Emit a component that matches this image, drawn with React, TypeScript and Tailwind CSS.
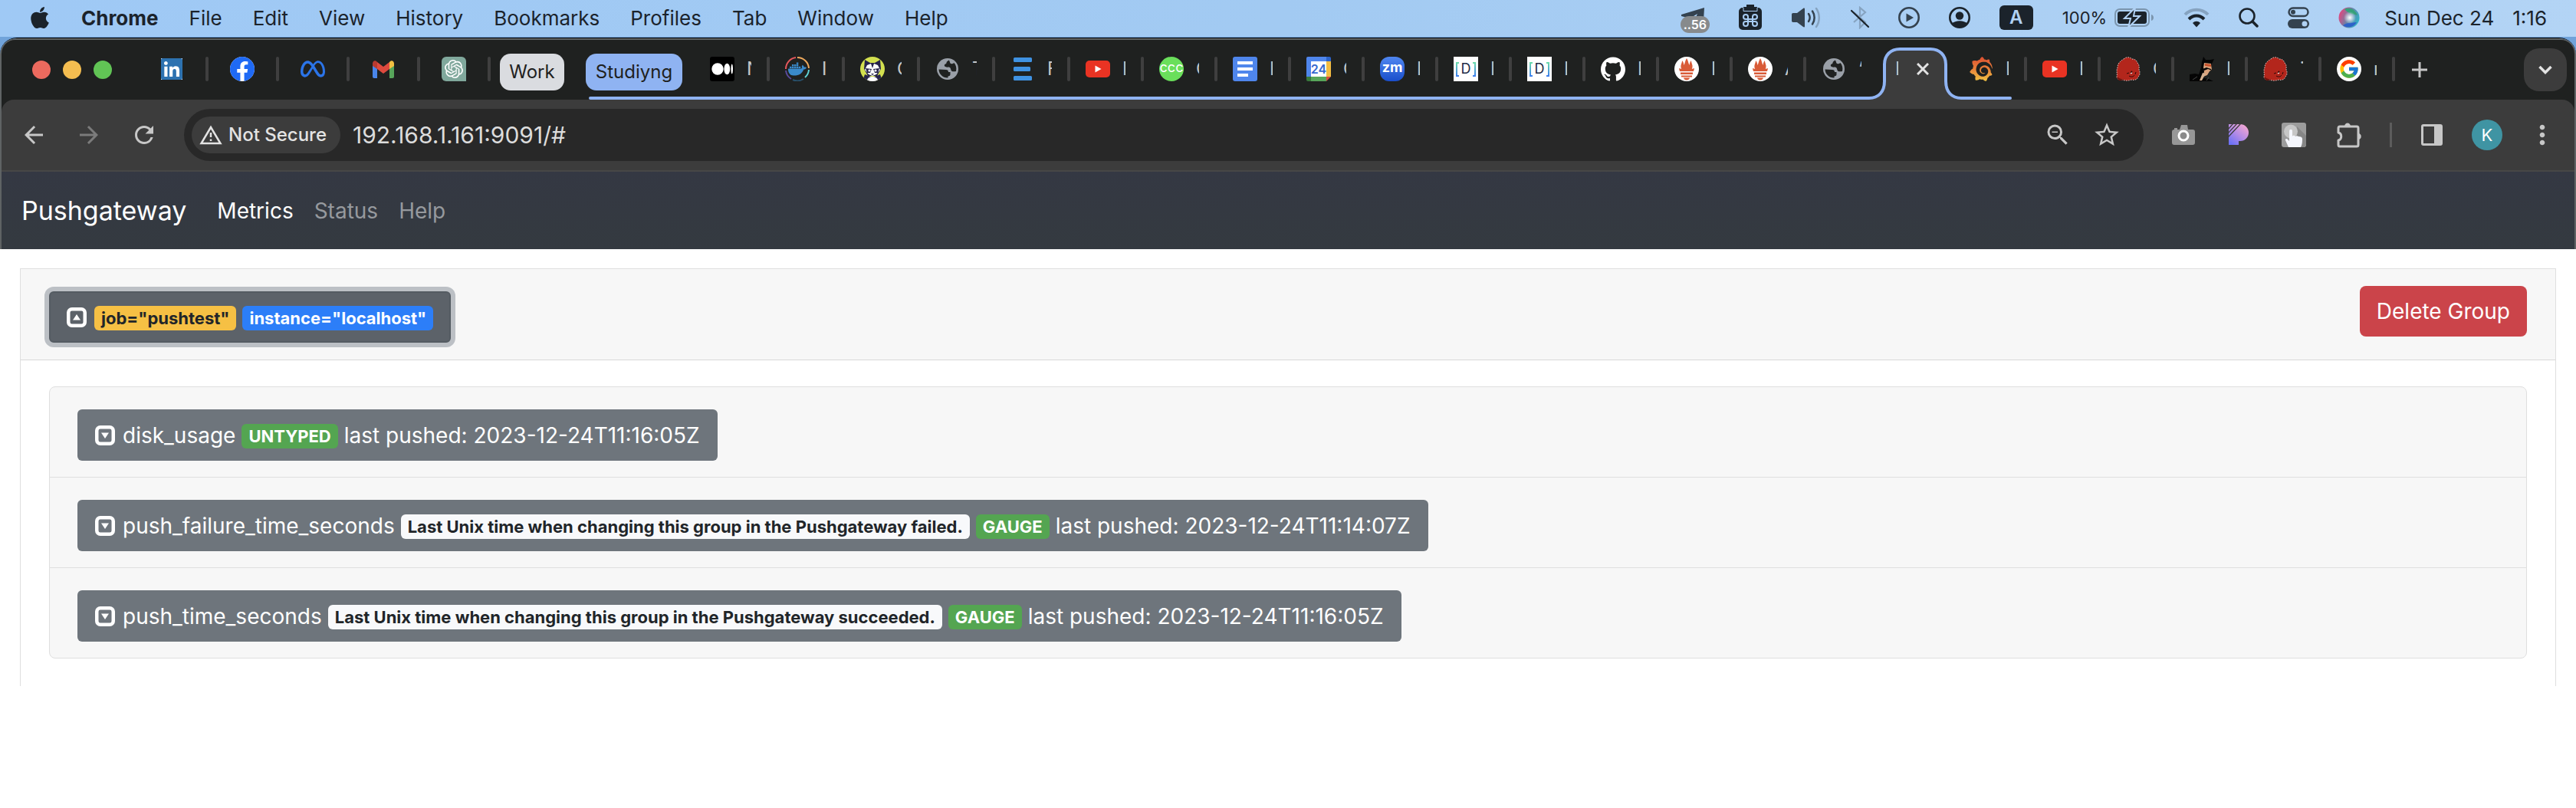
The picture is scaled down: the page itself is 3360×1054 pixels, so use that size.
import type { ReactNode } from "react";
import { FaApple, FaFacebook, FaLinkedin } from "react-icons/fa";
import { FcGoogle } from "react-icons/fc";
import { SiDocker, SiGithub, SiGrafana, SiMeta, SiOpenai } from "react-icons/si";
import { MdArrowBack, MdArrowForward, MdMoreVert, MdRefresh, MdStarBorder, MdZoomOut } from "react-icons/md";

/* ---------- macOS menu bar ---------- */

const menus = ["File", "Edit", "View", "History", "Bookmarks", "Profiles", "Tab", "Window", "Help"];

function PlaneIcon() {
  return (
    <div className="relative h-10 w-[38px]">
      <svg viewBox="0 0 38 20" className="absolute left-0 top-1 w-[38px] text-[#34424f]" fill="currentColor" aria-hidden="true">
        <path d="M1 12 31 3l-1 17H18l4-9-10 6-11-3z" />
      </svg>
      <span className="absolute left-0 top-[18px] flex h-[22px] w-[38px] items-center justify-center rounded-full bg-[#878a8c] text-base font-semibold text-white">
        ..56
      </span>
    </div>
  );
}

function ClipboardIcon() {
  return (
    <svg viewBox="0 0 30 34" className="h-[34px] w-[30px]" aria-hidden="true">
      <path d="M10 0h10v3h4v5H6V3h4z" fill="#1b232b" />
      <path d="M6 4H5a5 5 0 0 0-5 5v19a5 5 0 0 0 5 5h20a5 5 0 0 0 5-5V9a5 5 0 0 0-5-5h-1v5H6z" fill="#1b232b" />
      <path d="M6 4v4.500h18V4" fill="none" stroke="#a8ccf3" strokeWidth="1" />
      <path
        d="M12 19v-3a3 3 0 1 0-3 3h12a3 3 0 1 0-3-3v9a3 3 0 1 0 3-3H9a3 3 0 1 0 3 3z"
        fill="none"
        stroke="#a8ccf3"
        strokeWidth="2"
      />
    </svg>
  );
}

function VolumeIcon() {
  return (
    <svg viewBox="0 0 40 30" className="h-[30px] w-10" fill="none" strokeLinecap="round" strokeWidth="2.500" aria-hidden="true">
      <path d="M3 9h5l8-6c1-.8 2-.4 2 .8v22.400c0 1.200-1 1.600-2 .8l-8-6H3c-1.500 0-2-.7-2-2v-8c0-1.300.5-2 2-2z" fill="#34424f" />
      <path d="M23 10c2 3 2 7 0 10M28 6.500c3.500 5 3.500 12 0 17" stroke="#34424f" />
      <path d="M33 3c5 7 5 17 0 24" stroke="#86a3c0" />
    </svg>
  );
}

function BluetoothOffIcon() {
  return (
    <svg viewBox="0 0 24 30" className="h-[30px] w-6" fill="none" strokeWidth="2.200" aria-hidden="true">
      <path d="M4 8l15 13-7 7V2l7 6L4 21" stroke="#86a3c0" />
      <path d="M1 6l22 21" stroke="#1b232b" strokeLinecap="round" />
    </svg>
  );
}

function PlayIcon() {
  return (
    <svg viewBox="0 0 28 28" className="h-7 w-7" aria-hidden="true">
      <circle cx="14" cy="14" r="12.700" fill="none" stroke="#34424f" strokeWidth="2.600" />
      <path d="M10.500 8.500v11l9.500-5.500z" fill="#34424f" />
    </svg>
  );
}

function PersonIcon() {
  return (
    <svg viewBox="0 0 28 28" className="h-7 w-7" aria-hidden="true">
      <circle cx="14" cy="14" r="12.700" fill="none" stroke="#1b232b" strokeWidth="2.600" />
      <circle cx="14" cy="11.500" r="5.200" fill="#1b232b" />
      <path d="M4 22c4-5 16-5 20 0-4 6-16 6-20 0z" fill="#1b232b" />
    </svg>
  );
}

function BatteryIcon() {
  return (
    <svg viewBox="0 0 52 26" className="h-[26px] w-[52px]" aria-hidden="true">
      <rect x="1" y="2" width="44" height="22" rx="6" fill="none" stroke="#7b95ae" strokeWidth="2" />
      <rect x="4" y="5" width="38" height="16" rx="3" fill="#1b232b" />
      <path d="M48 9c4 1 4 7 0 8z" fill="#7b95ae" />
      <path d="M27 0 13 14h8l-3 12 15-15h-8z" fill="#1b232b" stroke="#b0d1f4" strokeWidth="2" />
    </svg>
  );
}

function WifiIcon() {
  return (
    <svg viewBox="0 0 34 26" className="h-[26px] w-[34px]" fill="none" strokeWidth="4" aria-hidden="true">
      <path d="M2 9c8-8.500 22-8.500 30 0" stroke="#86a3c0" />
      <path d="M7 15c6-6 14-6 20 0" stroke="#1b232b" />
      <path d="M12 20c3-3 7-3 10 0l-5 5.500z" fill="#1b232b" />
    </svg>
  );
}

function SearchIcon() {
  return (
    <svg viewBox="0 0 26 26" className="h-[26px] w-[26px]" fill="none" stroke="#1b232b" strokeLinecap="round" aria-hidden="true">
      <circle cx="11" cy="11" r="9.500" strokeWidth="2.600" />
      <path d="M18 18l6 6" strokeWidth="3.500" />
    </svg>
  );
}

function ControlCenterIcon() {
  return (
    <svg viewBox="0 0 28 28" className="h-7 w-7" aria-hidden="true">
      <rect x="1.500" y="1.500" width="25" height="10.500" rx="5.250" fill="none" stroke="#34424f" strokeWidth="2.500" />
      <circle cx="7" cy="6.800" r="3" fill="#34424f" />
      <rect y="16" width="28" height="12" rx="6" fill="#34424f" />
      <circle cx="22" cy="22" r="3.500" fill="#b1d2f4" />
    </svg>
  );
}

function SiriIcon() {
  return (
    <svg viewBox="0 0 28 28" className="h-7 w-7" aria-hidden="true">
      <defs>
        <linearGradient id="siri" x1="0" y1="0.300" x2="1" y2="0.700">
          <stop offset="0" stopColor="#e8457c" />
          <stop offset="0.450" stopColor="#6f7fa4" />
          <stop offset="1" stopColor="#2bb3c8" />
        </linearGradient>
        <radialGradient id="siriGlow">
          <stop offset="0" stopColor="#fff" />
          <stop offset="1" stopColor="#fff" stopOpacity="0" />
        </radialGradient>
      </defs>
      <circle cx="14" cy="14" r="13.500" fill="url(#siri)" />
      <path d="M8 3c6-3 14 0 17 8-6-2-12-2-17-8z" fill="#36a07a" />
      <path d="M6 24c5 4 14 3 18-4-7 1-12 0-18 4z" fill="#2d62c9" />
      <circle cx="15" cy="14" r="8" fill="url(#siriGlow)" />
    </svg>
  );
}

function MenuBar() {
  return (
    <header className="flex h-12 items-center justify-between bg-linear-to-r from-[#9fc9f5] via-[#a2caf2] to-[#b3d4f5] px-[38px] pb-0.5 text-[26px] text-[#1b232b]">
      <nav className="flex items-center gap-10" aria-label="Application menu">
        <FaApple className="h-8 w-7 text-[#1b232b]" aria-hidden="true" />
        <span className="font-bold">Chrome</span>
        {menus.map((m) => (
          <span key={m}>{m}</span>
        ))}
      </nav>
      <div className="flex items-center gap-[38px]">
        <PlaneIcon />
        <ClipboardIcon />
        <VolumeIcon />
        <BluetoothOffIcon />
        <PlayIcon />
        <PersonIcon />
        <span className="flex h-8 w-11 items-center justify-center rounded-md bg-[#1b232b] text-2xl font-semibold text-[#b0d1f4]">A</span>
        <span className="flex items-center gap-2.5 text-[22px]">
          100%
          <BatteryIcon />
        </span>
        <WifiIcon />
        <SearchIcon />
        <ControlCenterIcon />
        <span className="flex items-center gap-8">
          <SiriIcon />
          <span className="flex gap-6">
            <span>Sun Dec 24</span>
            <span>1:16</span>
          </span>
        </span>
      </div>
    </header>
  );
}

/* ---------- favicons ---------- */

function GmailIcon() {
  return (
    <svg viewBox="0 0 30 23" className="h-[23px] w-[30px]" aria-hidden="true">
      <path d="M1 3v18a2 2 0 0 0 2 2h4V8z" fill="#4a86ea" />
      <path d="M29 3v18a2 2 0 0 1-2 2h-4V8z" fill="#57a55a" />
      <path d="M7 2l8 6 8-6v9l-8 6-8-6z" fill="#dd4a3e" />
      <path d="M1 4c0-4 4-5 6-2v9L1 7z" fill="#b93a30" />
      <path d="M29 4c0-4-4-5-6-2v9l6-4z" fill="#f3bf42" />
    </svg>
  );
}

function MediumIcon() {
  return (
    <svg viewBox="0 0 32 32" className="h-8 w-8" aria-hidden="true">
      <rect width="32" height="32" rx="3" fill="#000" />
      <g fill="#fff">
        <circle cx="10" cy="16" r="7.700" />
        <ellipse cx="22.300" cy="16" rx="3.900" ry="7.300" />
        <ellipse cx="28.700" cy="16" rx="1.300" ry="6.500" />
      </g>
    </svg>
  );
}

function DockerIcon() {
  return (
    <span className="relative flex h-8 w-8 items-center justify-center">
      <svg viewBox="0 0 32 32" className="absolute inset-0" fill="none" strokeWidth="2" aria-hidden="true">
        <path d="M1 16A15 15 0 0 1 14 1" stroke="#e4575c" />
        <path d="M16 1a15 15 0 0 1 15 14" stroke="#eda85c" />
        <path d="M31 17a15 15 0 0 1-5 10" stroke="#5fd3d6" />
        <path d="M24 29a15 15 0 0 1-14 1" stroke="#28506b" />
        <path d="M8 29a15 15 0 0 1-7-11" stroke="#594a9c" />
      </svg>
      <SiDocker className="h-6 w-6 text-[#3a8acb]" />
    </span>
  );
}

function RaccoonIcon() {
  return (
    <svg viewBox="0 0 32 32" className="h-8 w-8" aria-hidden="true">
      <defs>
        <clipPath id="round">
          <circle cx="16" cy="16" r="16" />
        </clipPath>
      </defs>
      <g clipPath="url(#round)">
        <rect width="32" height="32" fill="#d3e04f" />
        <path d="M6 4l7 4h6l7-4 1 12-5 9H10l-5-9z" fill="#25224a" />
        <path d="M9 11l5-2 2 6 2-6 5 2 3 6-5 6-5 2-5-2-5-6z" fill="#fff" />
        <path d="M7 15l8 1-2 5H9zM25 15l-8 1 2 5h4z" fill="#25224a" />
        <circle cx="12" cy="18" r="1.600" fill="#fff" />
        <circle cx="20" cy="18" r="1.600" fill="#fff" />
        <path d="M14 22h4l-2 2z" fill="#25224a" />
        <path d="M3 32l3-9 10 4 10-4 3 9z" fill="#25224a" />
        <ellipse cx="16" cy="31" rx="7" ry="5" fill="#fff" />
      </g>
    </svg>
  );
}

function ListIcon() {
  return (
    <svg viewBox="0 0 32 32" className="h-8 w-8" fill="#3f92e2" aria-hidden="true">
      <rect x="4" y="1" width="24" height="6" rx="1.500" />
      <rect x="4" y="13" width="22" height="6" rx="1.500" />
      <rect x="4" y="25" width="24" height="6" rx="1.500" />
    </svg>
  );
}

function GlobeIcon() {
  return (
    <svg viewBox="0 0 28 28" className="h-7 w-7" aria-hidden="true">
      <circle cx="14" cy="14" r="14" fill="#9aa0a8" />
      <path d="M2.500 14.500l9.500.5c2 0 3 1 3 3h2.500v3c0 1.500-1 2.500-3 2.500v2C8 25.800 2.800 21 2.500 14.500z" fill="#1f2120" />
      <path d="M15.500 2.600c-1 1.400-3 1.400-3 3.400s-2.700 1-2.700 3.400c0 1.600 3.200 2.600 5.200 2.100 2.500-.5 3 2 3.500 4 .5 2.200 3.500 2 6.500 1.500 1-4.500 0-8-2.500-11-1 1-4 2-5 .5s-.5-3-2-3.900z" fill="#1f2120" />
    </svg>
  );
}

function YoutubeIcon() {
  return (
    <svg viewBox="0 0 32 22" className="h-[22px] w-8" aria-hidden="true">
      <rect width="32" height="22" rx="5" fill="#e93323" />
      <path d="M12.500 6.500v9l8-4.500z" fill="#fff" />
    </svg>
  );
}

function DocsIcon() {
  return (
    <svg viewBox="0 0 32 32" className="h-8 w-8" aria-hidden="true">
      <rect width="32" height="32" rx="3" fill="#4f86ec" />
      <path d="M6 6h20v4H6zM6 14h20v4H6zM6 22h14v4H6z" fill="#fff" />
    </svg>
  );
}

function CalendarIcon() {
  return (
    <span className="relative flex h-8 w-8 items-center justify-center">
      <svg viewBox="0 0 32 32" className="absolute inset-0" aria-hidden="true">
        <path d="M2 0h24v6H6v20H0V2a2 2 0 0 1 2-2z" fill="#4f86ec" />
        <path d="M26 0h4a2 2 0 0 1 2 2v4h-6z" fill="#2c63c8" />
        <path d="M26 6h6v20h-6z" fill="#f3bd42" />
        <path d="M6 26h20v6H6z" fill="#57a55a" />
        <path d="M0 26h6v6H2a2 2 0 0 1-2-2z" fill="#38783b" />
        <path d="M26 26h6l-6 6z" fill="#d84c3e" />
        <path d="M6 6h20v20H6z" fill="#fff" />
      </svg>
      <span className="relative text-base font-semibold leading-none text-[#3569cf]">24</span>
    </span>
  );
}

function BracketDIcon() {
  return (
    <span className="relative flex h-8 w-8 items-center justify-center bg-white">
      <svg viewBox="0 0 32 32" className="absolute inset-0" fill="none" stroke="url(#bracket)" strokeWidth="2" aria-hidden="true">
        <defs>
          <linearGradient id="bracket" gradientUnits="userSpaceOnUse" x1="0" y1="6" x2="0" y2="26">
            <stop offset="0" stopColor="#6fe3a5" />
            <stop offset="1" stopColor="#3d7cf0" />
          </linearGradient>
        </defs>
        <path d="M7 8H4v17h3M25 8h3v17h-3" />
      </svg>
      <span className="relative text-lg leading-none text-[#1d2b45]">D</span>
    </span>
  );
}

function PrometheusIcon() {
  return (
    <svg viewBox="0 0 32 32" className="h-8 w-8" aria-hidden="true">
      <circle cx="16" cy="16" r="16" fill="#fff" />
      <g fill="#d95b37">
        <path d="M7 19c-.5-2-1-3-.8-4l3 1C7 11 10 9 10 5c2 2 2 4 2.500 6C14 8 14 5 16 2c2 3 2 6 3.500 9 .5-2 .5-4 2.500-6 0 4 3 6 .8 11l3-1c.2 1-.3 2-.8 4z" />
        <path d="M8 20.500h16V23H8zM9 24.500h14v2H9zM12 27.500h8c-.5 2-2 3-4 3s-3.500-1-4-3z" />
      </g>
    </svg>
  );
}

function GrafanaIcon() {
  return (
    <>
      <svg width="0" height="0" className="absolute" aria-hidden="true">
        <linearGradient id="grafana" x1="0" y1="0" x2="0" y2="1">
          <stop offset="0" stopColor="#dd4f31" />
          <stop offset="0.500" stopColor="#e8813a" />
          <stop offset="1" stopColor="#f1c443" />
        </linearGradient>
      </svg>
      <SiGrafana className="h-8 w-8 fill-[url(#grafana)]" />
    </>
  );
}

function RedBlobIcon() {
  return (
    <svg viewBox="0 0 32 32" className="h-8 w-8" aria-hidden="true">
      <path
        d="M10 3c3-3 8-3 11 0 4 0 6 2 7 5 3 3 2 6 2 9 2 4 1 7-1 9-1 4-5 5-9 4-5 2-9 1-12 0-4 1-7-1-7-4 1-4-1-8 1-12 0-5 3-8 8-11z"
        fill="#b3261c"
        stroke="#d8c8c6"
        strokeWidth="1"
        strokeDasharray="1.500 1.500"
      />
      <path d="M2 26c2 3 6 3 9 4l-5 1c-3 0-5-2-4-5z" fill="#6f130d" />
      <path d="M14 22l3-1M20 19c-1 1-1 2 0 3l1-3zM26 20l-1 3M17 25c3 2 6 1 7-1" stroke="#2b0a08" strokeWidth="1" fill="none" />
      <path d="M19 22l2-1" stroke="#fff" strokeWidth="1.200" />
    </svg>
  );
}

function MaskedManIcon() {
  return (
    <svg viewBox="0 0 32 32" className="h-8 w-8" aria-hidden="true">
      <path d="M0 23l7-1 5 1 3-9 1-7 2-7 3 4h6l5-1-3 6v5l-9 3-3 7 2 4 6 1 6 3H0z" fill="#050505" />
      <path d="M19 8l9 1 1 8-3 2-3 5-5 2 1-7-1-5z" fill="#d9a27c" />
      <path d="M20 9l8 1v3l-8-1z" fill="#c8502a" />
      <path d="M17 16l5-2 6 2 1 2-5-2-5 2z" fill="#050505" />
      <path d="M17 21l4 1-5 9h-3z" fill="#d5b090" />
      <path d="M4 30l6-4M22 31l3-4" stroke="#555" strokeWidth="0.800" />
    </svg>
  );
}

/* ---------- tab strip ---------- */

const pinned: { name: string; icon: ReactNode }[] = [
  {
    name: "LinkedIn",
    icon: (
      <span className="flex h-7 w-7 items-center justify-center bg-white">
        <FaLinkedin className="h-8 w-8 shrink-0 text-[#2d72b0]" />
      </span>
    ),
  },
  {
    name: "Facebook",
    icon: (
      <span className="flex h-8 w-8 items-center justify-center overflow-hidden rounded-full bg-white">
        <FaFacebook className="h-[34px] w-[34px] shrink-0 text-[#1f6af5]" />
      </span>
    ),
  },
  { name: "Meta", icon: <SiMeta className="h-8 w-8 text-[#2b74e8]" /> },
  { name: "Gmail", icon: <GmailIcon /> },
  {
    name: "ChatGPT",
    icon: (
      <span className="flex h-8 w-8 items-center justify-center rounded-md rounded-br-none bg-[#80a89c]">
        <SiOpenai className="h-6 w-6 text-white" />
      </span>
    ),
  },
];

type TabInfo = { title: string; icon: ReactNode };

const wideTabs: TabInfo[] = [
  { title: "N", icon: <MediumIcon /> },
  { title: "I", icon: <DockerIcon /> },
  { title: "C", icon: <RaccoonIcon /> },
  { title: "T", icon: <GlobeIcon /> },
  { title: "F", icon: <ListIcon /> },
];

const groupTabs: TabInfo[] = [
  { title: "I", icon: <YoutubeIcon /> },
  {
    title: "C",
    icon: (
      <span className="flex h-8 w-8 items-center justify-center rounded-full bg-[#6adf5b] pb-1 text-lg leading-none text-white">ccc</span>
    ),
  },
  { title: "I", icon: <DocsIcon /> },
  { title: "C", icon: <CalendarIcon /> },
  {
    title: "I",
    icon: (
      <span className="flex h-8 w-8 items-center justify-center rounded-xl bg-linear-to-b from-[#4f86f0] to-[#1a4ecb] pb-1 text-lg font-bold leading-none text-white">
        zm
      </span>
    ),
  },
  { title: "I", icon: <BracketDIcon /> },
  { title: "I", icon: <BracketDIcon /> },
  { title: "I", icon: <SiGithub className="h-8 w-8 text-white" /> },
  { title: "I", icon: <PrometheusIcon /> },
  { title: "A", icon: <PrometheusIcon /> },
];

const looseTabs: TabInfo[] = [
  { title: "I", icon: <YoutubeIcon /> },
  { title: "C", icon: <RedBlobIcon /> },
  { title: "I", icon: <MaskedManIcon /> },
  { title: "˙", icon: <RedBlobIcon /> },
  {
    title: "ı",
    icon: (
      <span className="flex h-8 w-8 items-center justify-center rounded-full bg-white">
        <FcGoogle className="h-7 w-7" />
      </span>
    ),
  },
];

function Separator() {
  return <span className="h-8 w-1 shrink-0 rounded-sm bg-[#3f3f3f]" />;
}

function Tab({ title, icon, wide = false, last = false }: TabInfo & { wide?: boolean; last?: boolean }) {
  return (
    <button type="button" className={`flex h-full shrink-0 items-center justify-between pb-0.5 pl-5 ${wide ? "w-[98px]" : "w-24"}`}>
      <span className="flex items-center gap-4">
        <span className="flex w-8 items-center justify-center">{icon}</span>
        <span className={`overflow-hidden text-left text-2xl leading-8 text-[#c7c7c7] ${wide ? "w-1.5" : "w-1"}`}>{title}</span>
      </span>
      {last ? null : <Separator />}
    </button>
  );
}

function ActiveTab() {
  return (
    <div className="relative flex h-full w-24 shrink-0 items-center pb-0.5 pl-5">
      <svg viewBox="0 0 124 68" className="absolute -left-4 bottom-0 z-10 h-[68px] w-[124px] max-w-none" aria-hidden="true">
        <path d="M0 68V66H2C14 66 22 58 22 44V22C22 10 30 2 42 2H82C94 2 102 10 102 22V44C102 58 110 66 122 66H124V68z" fill="#3c3c3c" />
        <path
          d="M0 66H2C14 66 22 58 22 44V22C22 10 30 2 42 2H82C94 2 102 10 102 22V44C102 58 110 66 122 66H124"
          fill="none"
          stroke="#8fb3f2"
          strokeWidth="4"
        />
      </svg>
      <span className="relative z-10 w-1 overflow-hidden text-2xl leading-8 text-[#c7c7c7]">I</span>
      <button type="button" aria-label="Close tab" className="relative z-10 ml-4 flex h-8 w-8 items-center justify-center text-[#e3e3e3]">
        <svg viewBox="0 0 16 16" className="h-4 w-4" stroke="currentColor" strokeWidth="3" aria-hidden="true">
          <path d="M1 1l14 14M15 1L1 15" />
        </svg>
      </button>
    </div>
  );
}

function TabStrip() {
  return (
    <div className="flex h-[78px] items-center overflow-hidden pl-10">
      <div className="flex shrink-0 gap-4">
        <span className="h-6 w-6 rounded-full bg-[#ec6a5e]" />
        <span className="h-6 w-6 rounded-full bg-[#f4bd50]" />
        <span className="h-6 w-6 rounded-full bg-[#61c455]" />
      </div>
      <div className="ml-[34px] flex h-full shrink-0">
        {pinned.map((p) => (
          <button key={p.name} type="button" aria-label={p.name} className="flex h-full w-[92px] items-center pb-0.5">
            <span className="flex flex-1 justify-center">{p.icon}</span>
            <Separator />
          </button>
        ))}
      </div>
      <button type="button" className="ml-3 mt-1.5 h-12 w-[84px] shrink-0 rounded-[14px] bg-[#dadce0] text-2xl text-[#1f2120]">
        Work
      </button>
      <div className="relative ml-7 flex h-full shrink-0 items-center">
        <button type="button" className="mr-4 mt-1.5 h-12 w-[126px] rounded-[14px] bg-[#8fb3f2] text-2xl text-[#1f2120]">
          Studiyng
        </button>
        <span className="absolute bottom-0 left-1 right-5 h-1 rounded-sm bg-[#8fb3f2]" />
        {wideTabs.map((t, i) => (
          <Tab key={i} {...t} wide />
        ))}
        {groupTabs.map((t, i) => (
          <Tab key={i} {...t} />
        ))}
        <Tab title="‘" icon={<GlobeIcon />} last />
        <ActiveTab />
        <Tab title="I" icon={<GrafanaIcon />} />
      </div>
      {looseTabs.map((t, i) => (
        <Tab key={i} {...t} />
      ))}
      <button type="button" aria-label="New tab" className="flex h-8 w-16 shrink-0 items-center justify-center text-[#c7c7c7]">
        <svg viewBox="0 0 20 20" className="h-5 w-5" stroke="currentColor" strokeWidth="3" aria-hidden="true">
          <path d="M10 0v20M0 10h20" />
        </svg>
      </button>
      <button
        type="button"
        aria-label="Search tabs"
        className="ml-auto mr-2.5 flex h-14 w-14 shrink-0 items-center justify-center rounded-[20px] bg-[#3c3c3c] text-[#e3e3e3]"
      >
        <svg viewBox="0 0 18 12" className="h-3 w-[18px]" fill="none" stroke="currentColor" strokeWidth="3.500" aria-hidden="true">
          <path d="M1.500 2L9 9.500 16.500 2" />
        </svg>
      </button>
    </div>
  );
}

/* ---------- toolbar ---------- */

function ToolButton({ label, children }: { label: string; children: ReactNode }) {
  return (
    <button type="button" aria-label={label} className="flex h-14 w-[72px] shrink-0 items-center justify-center text-[#c7c7c7]">
      {children}
    </button>
  );
}

function CameraIcon() {
  return (
    <svg viewBox="0 0 30 28" className="h-7 w-[30px]" aria-hidden="true">
      <path d="M3 7V5h4v2h3l2-6h8l1 6h6a3 3 0 0 1 3 3v14a3 3 0 0 1-3 3H3a3 3 0 0 1-3-3V10a3 3 0 0 1 3-3z" fill="#979797" />
      <circle cx="15" cy="15" r="6" fill="#8a8a8a" stroke="#fff" strokeWidth="3" />
    </svg>
  );
}

function StripedPIcon() {
  return (
    <svg viewBox="0 0 26 28" className="h-7 w-[26px]" aria-hidden="true">
      <defs>
        <linearGradient id="striped" x1="0.900" y1="0.100" x2="0.200" y2="1">
          <stop offset="0" stopColor="#f2a6d2" />
          <stop offset="0.500" stopColor="#b58ce6" />
          <stop offset="1" stopColor="#6e72f5" />
        </linearGradient>
      </defs>
      <path d="M0 0h15a11 11 0 0 1 0 22h-2v5H0z" fill="url(#striped)" />
      <path d="M-1 7L6-1M-1 12L11-1M-1 17L16-1" stroke="#3c3c3c" strokeWidth="1.300" />
    </svg>
  );
}

function TouchIcon() {
  return (
    <svg viewBox="0 0 32 32" className="h-8 w-8" aria-hidden="true">
      <rect width="32" height="32" rx="3" fill="#9c9c9c" />
      <path d="M20 5l12 12v12l-3 3h-9z" fill="#868686" />
      <circle cx="12" cy="11.500" r="9" fill="#c6c6c6" />
      <path d="M10 11c0-3 4-3 4 0v7c1-2 3-1 4 0 1-1 3-1 4 0 3 0 5 1 5 3 0 4 0 7-2 11H9l-4-9c-1-2 2-3 3-1l2 2z" fill="#f4f6fc" />
    </svg>
  );
}

function PuzzleIcon() {
  return (
    <svg viewBox="0 0 34 34" className="h-[34px] w-[34px]" aria-hidden="true">
      <path
        d="M5 6h22a2 2 0 0 1 2 2v22a2 2 0 0 1-2 2H5a2 2 0 0 1-2-2v-6c5-1 5-9 0-10V8a2 2 0 0 1 2-2z"
        fill="none"
        stroke="#c7c7c7"
        strokeWidth="3"
        strokeLinejoin="round"
      />
      <path d="M11 6c0-6 8-6 8 0zM29 15c5 0 5 8 0 8z" fill="#c7c7c7" />
    </svg>
  );
}

function SidePanelIcon() {
  return (
    <svg viewBox="0 0 28 28" className="h-7 w-7" aria-hidden="true">
      <rect x="1.500" y="1.500" width="25" height="25" rx="1.500" fill="none" stroke="#c7c7c7" strokeWidth="3" />
      <path d="M17 1h9v26h-9z" fill="#c7c7c7" />
    </svg>
  );
}

function Toolbar() {
  return (
    <div className="rounded-t-2xl bg-[#3c3c3c]">
      <div className="flex h-[92px] items-center px-1.5">
        <ToolButton label="Back">
          <MdArrowBack className="h-9 w-9" />
        </ToolButton>
        <ToolButton label="Forward">
          <MdArrowForward className="h-9 w-9 text-[#7b7b7b]" />
        </ToolButton>
        <ToolButton label="Reload">
          <MdRefresh className="h-9 w-9" />
        </ToolButton>
        <div className="mx-4 flex h-[68px] flex-1 items-center rounded-full bg-[#282828] pl-2.5 pr-4">
          <button
            type="button"
            className="flex h-12 w-[194px] shrink-0 items-center gap-2 rounded-full bg-[#3c3c3c] pl-2.5 text-2xl font-medium text-[#e3e3e3]"
          >
            <svg viewBox="0 0 30 26" className="h-[26px] w-[30px] shrink-0" fill="none" stroke="currentColor" strokeWidth="2.500" aria-hidden="true">
              <path d="M15 3L2.500 24h25zM15 10v6M15 18.500v2.500" />
            </svg>
            <span className="whitespace-nowrap">Not Secure</span>
          </button>
          <input
            type="text"
            aria-label="Address"
            defaultValue="192.168.1.161:9091/#"
            className="ml-4 h-12 flex-1 bg-transparent text-3xl text-[#dcdcdc] outline-none"
          />
          <button type="button" aria-label="Zoom out" className="flex w-16 justify-center text-[#c7c7c7]">
            <MdZoomOut className="h-9 w-9" />
          </button>
          <button type="button" aria-label="Bookmark this page" className="flex w-16 justify-center text-[#c7c7c7]">
            <MdStarBorder className="h-[38px] w-[38px]" />
          </button>
        </div>
        <ToolButton label="Screenshot">
          <CameraIcon />
        </ToolButton>
        <ToolButton label="Striped extension">
          <StripedPIcon />
        </ToolButton>
        <ToolButton label="Touch extension">
          <TouchIcon />
        </ToolButton>
        <ToolButton label="Extensions">
          <PuzzleIcon />
        </ToolButton>
        <span className="flex w-9 shrink-0 justify-center">
          <span className="h-8 w-[3px] bg-[#5c5c5c]" />
        </span>
        <ToolButton label="Side panel">
          <SidePanelIcon />
        </ToolButton>
        <ToolButton label="Profile">
          <span className="flex h-10 w-10 items-center justify-center rounded-full bg-[#3f94a3] text-[22px] text-white">K</span>
        </ToolButton>
        <ToolButton label="More">
          <MdMoreVert className="h-10 w-10" />
        </ToolButton>
      </div>
      <div className="h-0.5 bg-[#474747]" />
    </div>
  );
}

/* ---------- Pushgateway page ---------- */

function ChevronBox({ up = false }: { up?: boolean }) {
  return (
    <svg viewBox="0 0 26 26" className="mr-0.5 h-[26px] w-[26px] shrink-0" aria-hidden="true">
      <rect x="2.250" y="2.250" width="21.500" height="21.500" rx="4.500" fill="none" stroke="#fff" strokeWidth="4.500" />
      <path d={up ? "M8 16.500h10L13 9z" : "M8 9.500h10L13 17z"} fill="#fff" />
    </svg>
  );
}

const metrics = [
  { name: "disk_usage", help: "", type: "UNTYPED", pushed: "2023-12-24T11:16:05Z" },
  {
    name: "push_failure_time_seconds",
    help: "Last Unix time when changing this group in the Pushgateway failed.",
    type: "GAUGE",
    pushed: "2023-12-24T11:14:07Z",
  },
  {
    name: "push_time_seconds",
    help: "Last Unix time when changing this group in the Pushgateway succeeded.",
    type: "GAUGE",
    pushed: "2023-12-24T11:16:05Z",
  },
];

function Badge({ className, children }: { className: string; children: ReactNode }) {
  return <span className={`mt-0.5 h-8 whitespace-nowrap rounded-md px-[9px] text-[22px] font-bold leading-8 ${className}`}>{children}</span>;
}

function Navbar() {
  return (
    <nav className="flex h-[101px] items-center bg-linear-to-b from-[#343843] to-[#343a40] pl-[26px] text-[28px]" aria-label="Pushgateway">
      <a href="#" className="mr-10 text-[34px] text-white">
        Pushgateway
      </a>
      <div className="flex gap-[27px]">
        <a href="#metrics" className="text-white">
          Metrics
        </a>
        <a href="#status" className="text-[#96999e]">
          Status
        </a>
        <a href="#help" className="text-[#96999e]">
          Help
        </a>
      </div>
    </nav>
  );
}

function Groups() {
  return (
    <main className="px-[26px] pt-[25px] text-[28px]">
      <section className="border-x border-t border-[#dfdfdf]">
        <div className="flex items-start justify-between border-b border-[#d8d8d8] bg-[#f7f7f7] px-[37px] pb-[22px] pt-[22px]">
          <button
            type="button"
            aria-expanded="true"
            className="mt-[7px] flex h-[67px] items-center gap-2 rounded-md border-2 border-[#545b62] bg-[#5c6269] px-[21px] ring-6 ring-[#bcc0c5]"
          >
            <ChevronBox up />
            <Badge className="bg-[#f6c044] text-[#212529]">job="pushtest"</Badge>
            <Badge className="bg-[#2c7ef8] text-white">instance="localhost"</Badge>
          </button>
          <button type="button" className="h-[66px] rounded-lg bg-[#cb444a] px-[22px] text-white">
            Delete Group
          </button>
        </div>
        <div className="px-[37px] pb-9 pt-[34px]">
          <ul className="divide-y divide-[#dfdfdf] overflow-hidden rounded-lg border border-[#dfdfdf] bg-[#f7f7f7]">
            {metrics.map((m) => (
              <li key={m.name} className="px-9 pb-[21px] pt-[29px]">
                <button
                  type="button"
                  aria-expanded="false"
                  className="flex h-[67px] items-center gap-2 rounded-md bg-[#6e757c] px-[23px] text-white"
                >
                  <ChevronBox />
                  <span>{m.name}</span>
                  {m.help ? <Badge className="bg-[#f8f9fb] text-[#212529]">{m.help}</Badge> : null}
                  <Badge className="bg-[#54a551] text-white">{m.type}</Badge>
                  <span>last pushed: {m.pushed}</span>
                </button>
              </li>
            ))}
          </ul>
        </div>
      </section>
    </main>
  );
}

export default function App() {
  return (
    <div className="min-h-screen bg-white font-['Inter',sans-serif]">
      <MenuBar />
      <div className="bg-[#71a3da] pt-px">
        <div className="overflow-hidden rounded-t-[22px] border-t border-black">
          <div className="overflow-hidden rounded-t-[20px] border-x-2 border-t-2 border-[#5f6364] bg-[#1f2120]">
            <TabStrip />
            <Toolbar />
            <Navbar />
          </div>
        </div>
      </div>
      <Groups />
    </div>
  );
}
